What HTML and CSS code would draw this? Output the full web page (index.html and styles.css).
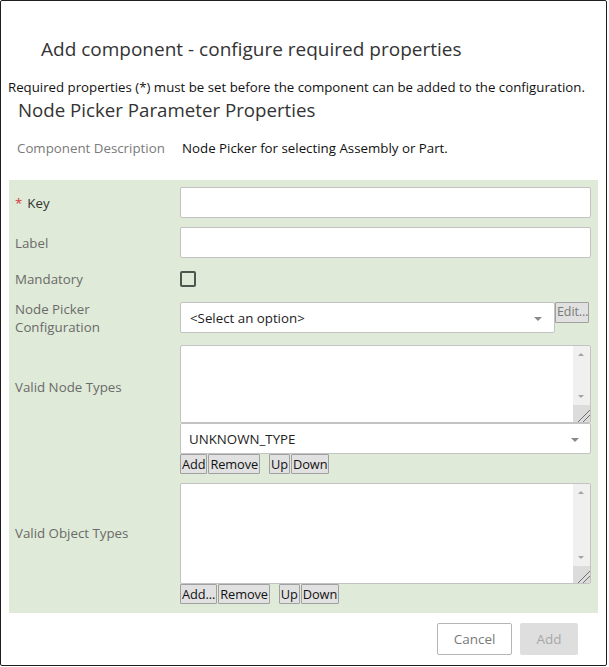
FILE: index.html
```html
<!DOCTYPE html>
<html>
<head>
<meta charset="utf-8">
<link rel="stylesheet" href="styles.css">
</head>
<body>
<div class="dialog">
  <h1 class="title">Add component - configure required properties</h1>
  <p class="intro">Required properties (*) must be set before the component can be added to the configuration.</p>
  <h2 class="section">Node Picker Parameter Properties</h2>
  <div class="desc-row">
    <span class="desc-label">Component Description</span>
    <span class="desc-value">Node Picker for selecting Assembly or Part.</span>
  </div>
  <div class="panel">
    <div class="row row-key">
      <div class="lbl lbl-req"><span class="star">*</span>Key</div>
      <div class="field"><div class="input"></div></div>
    </div>
    <div class="row row-label">
      <div class="lbl">Label</div>
      <div class="field"><div class="input"></div></div>
    </div>
    <div class="row row-check">
      <div class="lbl">Mandatory</div>
      <div class="field"><div class="checkbox"></div></div>
    </div>
    <div class="row row-npc">
      <div class="lbl">Node Picker<br>Configuration</div>
      <div class="field field-npc">
        <div class="select select-npc"><span>&lt;Select an option&gt;</span><i class="caret"></i></div>
        <div class="btn btn-edit">Edit...</div>
      </div>
    </div>
    <div class="row row-nodes">
      <div class="lbl lbl-nodes">Valid Node Types</div>
      <div class="field field-col">
        <div class="textarea ta-nodes">
          <div class="ta-body"></div>
          <div class="sbar"><i class="arr-up"></i><i class="arr-down"></i><div class="grip"></div></div>
        </div>
        <div class="select select-type"><span>UNKNOWN_TYPE</span><i class="caret"></i></div>
        <div class="btns">
          <div class="btn">Add</div><div class="btn">Remove</div><div class="btn btn-gap">Up</div><div class="btn">Down</div>
        </div>
      </div>
    </div>
    <div class="row row-objs">
      <div class="lbl lbl-objs">Valid Object Types</div>
      <div class="field field-col">
        <div class="textarea ta-objs">
          <div class="ta-body"></div>
          <div class="sbar"><i class="arr-up"></i><i class="arr-down"></i><div class="grip"></div></div>
        </div>
        <div class="btns">
          <div class="btn">Add...</div><div class="btn">Remove</div><div class="btn btn-gap">Up</div><div class="btn">Down</div>
        </div>
      </div>
    </div>
  </div>
  <div class="footer">
    <div class="fbtn fbtn-cancel">Cancel</div>
    <div class="fbtn fbtn-add">Add</div>
  </div>
</div>
</body>
</html>
```

FILE: styles.css
```css
* { box-sizing: border-box; }
html, body { margin: 0; padding: 0; background: #fff; }
body { font-family: "Open Sans", "Noto Sans", sans-serif; color: #333; }

.dialog {
  width: 607px;
  height: 666px;
  border: 1px solid #1e1e1e;
  border-radius: 2px;
  background: #fff;
}

.title {
  margin: 0;
  padding: 35px 0 0 40px;
  height: 77px;
  font-size: 19px;
  font-weight: 400;
  line-height: 26px;
  color: #333;
}

.intro {
  margin: 0;
  padding-left: 7px;
  font-size: 13.25px;
  line-height: 18px;
  color: #111;
}

.section {
  margin: 1px 0 0 0;
  padding-left: 17px;
  font-size: 18.7px;
  font-weight: 400;
  line-height: 26px;
  color: #333;
}

.desc-row {
  display: flex;
  height: 57px;
  align-items: center;
  padding: 0 0 7px 16px;
  font-size: 13.3px;
}
.desc-label { width: 165px; color: #7a7a7a; }
.desc-value { color: #111; }

.panel {
  margin: 0 8px;
  background: #dfead8;
  padding: 7px 7px 9px 6px;
  height: 433px;
}

.row { display: flex; align-items: center; }
.lbl {
  width: 165px;
  flex: none;
  font-size: 13.3px;
  line-height: 18px;
  color: #6a6a6a;
}
.lbl-req { color: #333; }
.star { color: #d8383f; margin-right: 5px; }
.field { flex: 1; display: flex; }

.row-key { height: 31px; margin-bottom: 9px; }
.row-label { height: 31px; margin-bottom: 13px; }
.row-check { height: 16px; margin-bottom: 15px; }
.row-npc { height: 31px; margin-bottom: 12px; }
.row-nodes { align-items: flex-start; margin-bottom: 9px; }
.row-objs { align-items: flex-start; }
.lbl-nodes { padding-top: 33px; }
.lbl-objs { padding-top: 41px; }

.input {
  width: 100%;
  height: 31px;
  background: #fff;
  border: 1px solid #c3c3c3;
  border-radius: 2px;
}

.checkbox {
  width: 16px;
  height: 16px;
  border: 2px solid #4f564f;
  border-radius: 2px;
}

.field-npc { align-items: flex-start; }
.select {
  position: relative;
  height: 31px;
  background: #fff;
  border: 1px solid #c3c3c3;
  border-radius: 2px;
  display: flex;
  align-items: center;
  padding-left: 9px;
  font-size: 13.3px;
  color: #222;
}
.select-npc { width: 375px; }
.select-type { width: 100%; padding-left: 8px; }
.caret {
  position: absolute;
  top: 14px;
  right: 12px;
  width: 0; height: 0;
  border-left: 4.5px solid transparent;
  border-right: 4.5px solid transparent;
  border-top: 4.5px solid #8a8a8a;
}
.select-type .caret { right: 11px; }

.btns { display: flex; gap: 1px; }
.btn {
  height: 20px;
  background: #e1e1e1;
  border: 1px solid #a0a0a0;
  border-radius: 1px;
  padding: 0 1px;
  font-size: 12.8px;
  line-height: 18px;
  color: #111;
  letter-spacing: -0.1px;
}
.btn-edit {
  height: 21px;
  width: 34px;
  color: #7a7a7a;
  padding: 0 0 0 1px;
  font-size: 12.5px;
  line-height: 18px;
  overflow: hidden;
  white-space: nowrap;
}
.btn-gap { margin-left: 8px; }

.field-col { flex-direction: column; }
.textarea {
  display: flex;
  width: 100%;
  background: #fff;
  border: 1px solid #c3c3c3;
  border-radius: 2px;
}
.ta-nodes { height: 78px; }
.ta-objs { height: 101px; }
.ta-body { flex: 1; }
.sbar {
  width: 17px;
  position: relative;
  background: #f0f0f0;
}
.arr-up, .arr-down {
  position: absolute;
  left: 5px;
  width: 0; height: 0;
  border-left: 3.5px solid transparent;
  border-right: 3.5px solid transparent;
}
.arr-up { top: 7px; border-bottom: 3.5px solid #a3a3a3; }
.arr-down { bottom: 24px; border-top: 3.5px solid #a3a3a3; }
.grip {
  position: absolute;
  left: 0; right: 0; bottom: 0;
  height: 17px;
  background:
    linear-gradient(135deg, transparent 0 62%, #707070 62% 66%, transparent 66% 78%, #707070 78% 82%, transparent 82%),
    #dcdcdc;
}

.footer {
  display: flex;
  justify-content: flex-end;
  gap: 8px;
  padding: 10px 28px 0 0;
}
.fbtn {
  height: 32px;
  border-radius: 2px;
  font-size: 13.5px;
  display: flex;
  align-items: center;
  justify-content: center;
}
.fbtn-cancel { width: 75px; border: 1px solid #b5b5b5; color: #7a7a7a; background: #fff; }
.fbtn-add { width: 58px; background: #dedede; color: #a8a8a8; }
```
